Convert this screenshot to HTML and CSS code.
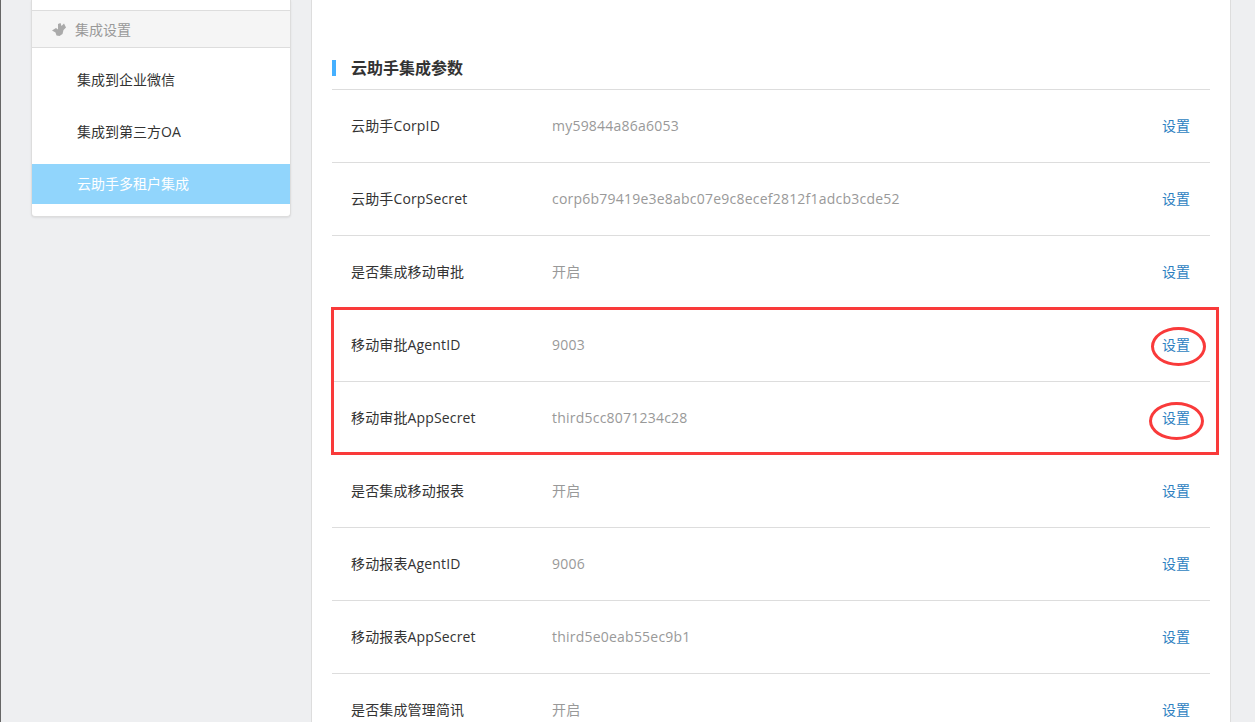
FILE: index.html
```html
<!DOCTYPE html>
<html>
<head>
    <title>云助手集成参数</title>
    <link rel="stylesheet" href="styles.css">
</head>
<body>
    <div class="page">
        <div class="sidebar">
            <div class="side-gap"></div>
            <div class="side-head">
                <svg class="side-icon" viewBox="0 0 14 13" width="14" height="13">
                    <path d="M0 7.5 L4 5 L6 6.5 L6 1 L8.5 0 L9.5 3 L12 0.5 L14 4.5 L11.5 7 L10.5 11 L7.5 13 L4.5 12.5 L3.5 9.5 Z" fill="#aaaaaa"/>
                </svg>
                <span>集成设置</span>
            </div>
            <ul class="side-menu">
                <li>集成到企业微信</li>
                <li>集成到第三方OA</li>
                <li class="active">云助手多租户集成</li>
            </ul>
        </div>
        <div class="main">
            <h2 class="section-title">云助手集成参数</h2>
            <div class="row"><div class="row-label">云助手CorpID</div><div class="row-value">my59844a86a6053</div><a class="row-link">设置</a></div>
            <div class="row"><div class="row-label">云助手CorpSecret</div><div class="row-value">corp6b79419e3e8abc07e9c8ecef2812f1adcb3cde52</div><a class="row-link">设置</a></div>
            <div class="row"><div class="row-label">是否集成移动审批</div><div class="row-value">开启</div><a class="row-link">设置</a></div>
            <div class="row"><div class="row-label">移动审批AgentID</div><div class="row-value">9003</div><a class="row-link">设置</a></div>
            <div class="row"><div class="row-label">移动审批AppSecret</div><div class="row-value">third5cc8071234c28</div><a class="row-link">设置</a></div>
            <div class="row"><div class="row-label">是否集成移动报表</div><div class="row-value">开启</div><a class="row-link">设置</a></div>
            <div class="row"><div class="row-label">移动报表AgentID</div><div class="row-value">9006</div><a class="row-link">设置</a></div>
            <div class="row"><div class="row-label">移动报表AppSecret</div><div class="row-value">third5e0eab55ec9b1</div><a class="row-link">设置</a></div>
            <div class="row"><div class="row-label">是否集成管理简讯</div><div class="row-value">开启</div><a class="row-link">设置</a></div>
        </div>
    </div>
    <div class="mark-box"></div>
    <div class="mark-oval oval-one"></div>
    <div class="mark-oval oval-two"></div>
</body>
</html>
```

FILE: styles.css
```css
html, body {
    margin: 0;
    padding: 0;
    height: 722px;
    overflow: hidden;
}
body {
    font-family: "Open Sans", "Noto Sans CJK SC", sans-serif;
    font-size: 14px;
    background-color: #eeeff1;
    color: #333333;
    border-left: 1px solid #666666;
    box-sizing: border-box;
    position: relative;
}
.page {
    display: flex;
    align-items: flex-start;
    padding-left: 31px;
}
.sidebar {
    width: 258px;
    height: 216px;
    background-color: #ffffff;
    border: 1px solid #dddddd;
    border-top: none;
    border-radius: 0 0 4px 4px;
    box-shadow: 0 1px 2px rgba(0, 0, 0, 0.08);
    box-sizing: content-box;
    margin-left: -1px;
}
.side-gap {
    height: 10px;
}
.side-head {
    height: 36px;
    display: flex;
    align-items: center;
    padding-left: 20px;
    background-color: #f5f5f5;
    border-top: 1px solid #dddddd;
    border-bottom: 1px solid #dddddd;
    color: #999999;
}
.side-icon {
    margin-right: 9px;
}
.side-menu {
    list-style: none;
    margin: 0;
    padding: 12px 0 0;
}
.side-menu li {
    height: 40px;
    line-height: 40px;
    padding-left: 45px;
    margin-bottom: 12px;
    color: #333333;
}
.side-menu li.active {
    background-color: #91d5fc;
    color: #ffffff;
    margin-bottom: 0;
}
.main {
    width: 878px;
    height: 722px;
    margin-left: 20px;
    padding: 0 20px;
    background-color: #ffffff;
    border-left: 1px solid #dddddd;
    border-right: 1px solid #dddddd;
}
.section-title {
    height: 89px;
    line-height: 136px;
    box-sizing: content-box;
    margin: 0;
    font-size: 16px;
    font-weight: bold;
    color: #333333;
    border-bottom: 1px solid #dddddd;
    padding-left: 19px;
    position: relative;
}
.section-title::before {
    content: "";
    position: absolute;
    left: 0;
    top: 60px;
    width: 4px;
    height: 16px;
    background-color: #45b0ff;
}
.row {
    height: 73px;
    box-sizing: border-box;
    display: flex;
    align-items: center;
    padding: 0 20px 2px 19px;
    border-bottom: 1px solid #dddddd;
}
.row-label {
    width: 201px;
    color: #333333;
    letter-spacing: 0.15px;
}
.row-value {
    flex: 1;
    color: #999999;
    letter-spacing: 0.22px;
}
.row-link {
    color: #2d7fc1;
}
.mark-box {
    position: absolute;
    left: 330px;
    top: 307px;
    width: 882px;
    height: 142px;
    border: 3px solid #f93a3a;
}
.mark-oval {
    position: absolute;
    height: 33px;
    border: 3px solid #f93a3a;
    border-radius: 50%;
}
.oval-one {
    left: 1150px;
    top: 327px;
    width: 49px;
}
.oval-two {
    left: 1148px;
    top: 402px;
    width: 49px;
    height: 32px;
}
```
